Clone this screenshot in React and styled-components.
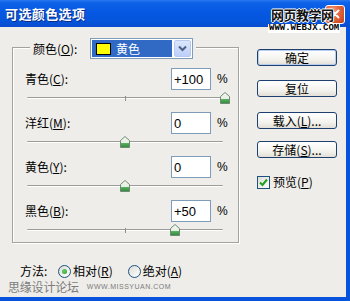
import React from 'react';
import styled, { createGlobalStyle } from 'styled-components';

const BODY = '#eeede9';
const FRAME = '#0853dc';

const GlobalStyle = createGlobalStyle`
  html, body { margin: 0; padding: 0; background: #fff; }
  body {
    font-family: "Noto Sans CJK SC", "Liberation Sans", sans-serif;
    font-size: 12px;
    color: #000;
    white-space: nowrap;
  }
`;

const Window = styled.div`
  position: relative;
  width: 350px;
  height: 301px;
  display: flex;
  flex-direction: column;
  overflow: hidden;
`;

const TitleBar = styled.div`
  flex: none;
  height: 27px;
  display: flex;
  align-items: center;
  justify-content: space-between;
  padding: 0 5px;
  background: linear-gradient(to bottom, #2a78f0 0%, #0d62e8 10%, #0658e2 45%, #0554dc 80%, #0a4ccc 100%);
`;

const Title = styled.span`
  color: #fff;
  font-weight: bold;
  font-size: 13px;
  line-height: 16px;
  letter-spacing: 0.4px;
  text-shadow: 1px 1px 0 #0a2c86;
`;

const CloseButton = styled.div`
  box-sizing: border-box;
  width: 20px;
  height: 19px;
  margin-top: 1px;
  border: 1px solid #fff;
  border-radius: 3px;
  background: radial-gradient(circle at 35% 30%, #f3a68a 0%, #e2643c 45%, #c4401c 100%);
  display: flex;
  align-items: center;
  justify-content: center;
`;

const TopMark = styled.div`
  position: absolute;
  left: 271px;
  top: 7px;
  display: flex;
  flex-direction: column;
  align-items: flex-start;
  pointer-events: none;
`;

const TopMarkCn = styled.span`
  font-size: 13px;
  line-height: 15px;
  font-weight: bold;
  color: #111;
  letter-spacing: -0.5px;
  text-shadow: 1px 0 0 #fff, -1px 0 0 #fff, 0 1px 0 #fff, 0 -1px 0 #fff;
`;

const TopMarkEn = styled.span`
  margin-top: 2px;
  margin-left: -3px;
  font-family: "Liberation Mono", monospace;
  font-size: 9px;
  line-height: 9px;
  font-weight: bold;
  color: #000;
  background: #fff;
  padding: 0 1px;
`;

const Frame = styled.div`
  flex: 1;
  display: flex;
  flex-direction: column;
  background: ${BODY};
  border-right: 4px solid ${FRAME};
  border-bottom: 4px solid ${FRAME};
`;

const Main = styled.div`
  display: flex;
  align-items: flex-start;
  padding: 20px 0 0 12px;
`;

const GroupBox = styled.div`
  box-sizing: border-box;
  width: 227px;
  height: 196px;
  border: 1px solid #a2a29e;
  box-shadow: inset 1px 1px 0 #fff, 1px 1px 0 #fff;
  display: flex;
  flex-direction: column;
`;

const Legend = styled.div`
  align-self: flex-start;
  display: flex;
  align-items: center;
  margin: -10px 0 0 17px;
  padding: 0 3px;
  background: ${BODY};
`;

const LegendLabel = styled.span`
  flex: none;
  width: 57px;
  line-height: 16px;
`;

const Dropdown = styled.div`
  box-sizing: border-box;
  flex: none;
  width: 103px;
  height: 21px;
  border: 1px solid #7f9db9;
  background: #fff;
  padding: 1px;
  display: flex;
`;

const Selected = styled.div`
  flex: 1;
  display: flex;
  align-items: center;
  gap: 5px;
  padding-left: 4px;
  background: #316ac5;
  color: #fff;
  line-height: 16px;
`;

const Swatch = styled.span`
  box-sizing: border-box;
  width: 15px;
  height: 12px;
  background: ${(p) => p.$color};
  border: 1px solid #000;
`;

const ArrowButton = styled.div`
  box-sizing: border-box;
  width: 17px;
  margin-left: 2px;
  border: 1px solid #b6c9f1;
  border-radius: 2px;
  background: linear-gradient(to bottom, #dce7fd, #bccff7);
  display: flex;
  align-items: center;
  justify-content: center;
`;

const Sections = styled.div`
  margin-top: 9px;
  padding-left: 12px;
  display: flex;
  flex-direction: column;
  gap: 2px;
`;

const Section = styled.div`
  display: flex;
  flex-direction: column;
`;

const Row = styled.div`
  height: 22px;
  display: flex;
  align-items: center;
`;

const Label = styled.span`
  flex: none;
  width: 146px;
  line-height: 16px;
`;

const NumberBox = styled.div`
  box-sizing: border-box;
  width: 40px;
  height: 22px;
  border: 1px solid #7f9db9;
  background: #fff;
  padding-left: 2px;
  display: flex;
  align-items: center;
  font-family: "Liberation Sans", Arial, sans-serif;
  font-size: 13px;
`;

const Percent = styled.span`
  margin-left: 6px;
  font-family: "Liberation Sans", Arial, sans-serif;
  font-size: 12px;
`;

const Slider = styled.div`
  position: relative;
  width: 200px;
  height: 20px;
`;

const Track = styled.div`
  width: 196px;
  margin: 7px 0 0 2px;
  height: 0;
  border-top: 1px solid #9c9c98;
  border-bottom: 1px solid #fff;
  border-radius: 1px;
`;

const Tick = styled.div`
  position: absolute;
  left: 100px;
  top: 6px;
  width: 1px;
  height: 5px;
  background: #8e8e8a;
`;

const Thumb = styled.svg`
  position: absolute;
  top: 2px;
  width: 10px;
  height: 12px;
`;

const Side = styled.div`
  width: 80px;
  margin-left: 18px;
  padding-top: 2px;
  display: flex;
  flex-direction: column;
`;

const Button = styled.div`
  box-sizing: border-box;
  height: 17px;
  margin-top: ${(p) => p.$mt || 0}px;
  border: 1px solid #1f3f6e;
  border-radius: 3px;
  background: linear-gradient(to bottom, #ffffff 0%, #f4f3ee 60%, #e2dfd6 100%);
  box-shadow: ${(p) => (p.$default ? 'inset 0 0 0 1px #b7cdf0' : 'none')};
  display: flex;
  align-items: center;
  justify-content: center;
  line-height: 15px;
`;

const CheckRow = styled.div`
  margin-top: 16px;
  display: flex;
  align-items: center;
  gap: 3px;
  line-height: 16px;
`;

const CheckBox = styled.span`
  box-sizing: border-box;
  width: 13px;
  height: 13px;
  border: 1px solid #1c5180;
  background: linear-gradient(135deg, #dcdcd6, #fff);
  display: flex;
  align-items: center;
  justify-content: center;
`;

const MethodRow = styled.div`
  margin-top: 20px;
  padding-left: 20px;
  height: 16px;
  display: flex;
  align-items: center;
  line-height: 16px;
`;

const MethodLabel = styled.span`
  width: 38px;
`;

const Radio = styled.span`
  box-sizing: border-box;
  width: 13px;
  height: 13px;
  margin-left: ${(p) => p.$ml || 0}px;
  margin-right: 2px;
  border: 1px solid #1c5180;
  border-radius: 50%;
  background: linear-gradient(135deg, #dcdcd6, #fff);
  display: flex;
  align-items: center;
  justify-content: center;
`;

const RadioDot = styled.span`
  width: 5px;
  height: 5px;
  border-radius: 50%;
  background: radial-gradient(circle at 40% 40%, #6fd06f, #1f9a1f);
`;

const FootMark = styled.div`
  padding-left: 8px;
  height: 15px;
  display: flex;
  align-items: center;
  color: #7c7c7c;
`;

const FootMarkCn = styled.span`
  font-size: 12px;
  line-height: 14px;
  letter-spacing: -0.2px;
`;

const FootMarkEn = styled.span`
  margin-left: 8px;
  font-family: "Liberation Sans", Arial, sans-serif;
  font-size: 7px;
  letter-spacing: 0.5px;
`;

const channels = [
  { name: '青色', key: 'C', value: 100 },
  { name: '洋红', key: 'M', value: 0 },
  { name: '黄色', key: 'Y', value: 0 },
  { name: '黑色', key: 'B', value: 50 },
];

const fmt = (v) => (v > 0 ? `+${v}` : `${v}`);

function SliderThumb({ value }) {
  const id = React.useId();
  return (
    <Thumb viewBox="0 0 10 12" style={{ left: value + 100 - 5 }}>
      <defs>
        <linearGradient id={id} x1="0" y1="0" x2="0" y2="1">
          <stop offset="0" stopColor="#f6f7f2" />
          <stop offset="0.55" stopColor="#e6efe2" />
          <stop offset="0.62" stopColor="#58ae62" />
          <stop offset="1" stopColor="#2e8a3a" />
        </linearGradient>
      </defs>
      <path d="M5 0.5 L9.5 4.5 L9.5 11.5 L0.5 11.5 L0.5 4.5 Z" fill={`url(#${id})`} stroke="#6f8a72" strokeWidth="1" />
    </Thumb>
  );
}

export default function App() {
  return (
    <>
      <GlobalStyle />
      <Window>
        <TitleBar>
          <Title>可选颜色选项</Title>
          <CloseButton>
            <svg width="10" height="10" viewBox="0 0 10 10">
              <path d="M1.5 1.5 L8.5 8.5 M8.5 1.5 L1.5 8.5" stroke="#fff" strokeWidth="2" strokeLinecap="round" />
            </svg>
          </CloseButton>
        </TitleBar>
        <Frame>
          <Main>
            <GroupBox>
              <Legend>
                <LegendLabel>
                  颜色(<u>O</u>):
                </LegendLabel>
                <Dropdown>
                  <Selected>
                    <Swatch $color="#ffff00" />
                    <span>黄色</span>
                  </Selected>
                  <ArrowButton>
                    <svg width="9" height="7" viewBox="0 0 9 7">
                      <path d="M1 1.5 L4.5 5 L8 1.5" fill="none" stroke="#4d6185" strokeWidth="2" />
                    </svg>
                  </ArrowButton>
                </Dropdown>
              </Legend>
              <Sections>
                {channels.map((c) => (
                  <Section key={c.key}>
                    <Row>
                      <Label>
                        {c.name}(<u>{c.key}</u>):
                      </Label>
                      <NumberBox>{fmt(c.value)}</NumberBox>
                      <Percent>%</Percent>
                    </Row>
                    <Slider>
                      <Track />
                      <Tick />
                      <SliderThumb value={c.value} />
                    </Slider>
                  </Section>
                ))}
              </Sections>
            </GroupBox>
            <Side>
              <Button $default>确定</Button>
              <Button $mt={14}>复位</Button>
              <Button $mt={15}>
                载入(<u>L</u>)...
              </Button>
              <Button $mt={12}>
                存储(<u>S</u>)...
              </Button>
              <CheckRow>
                <CheckBox>
                  <svg width="9" height="9" viewBox="0 0 9 9">
                    <path d="M1 4.5 L3.5 7 L8 1.5" fill="none" stroke="#21a121" strokeWidth="2" />
                  </svg>
                </CheckBox>
                <span>
                  预览(<u>P</u>)
                </span>
              </CheckRow>
            </Side>
          </Main>
          <MethodRow>
            <MethodLabel>方法:</MethodLabel>
            <Radio>
              <RadioDot />
            </Radio>
            <span>
              相对(<u>R</u>)
            </span>
            <Radio $ml={15} />
            <span>
              绝对(<u>A</u>)
            </span>
          </MethodRow>
          <FootMark>
            <FootMarkCn>思缘设计论坛</FootMarkCn>
            <FootMarkEn>WWW.MISSYUAN.COM</FootMarkEn>
          </FootMark>
        </Frame>
        <TopMark>
          <TopMarkCn>网页教学网</TopMarkCn>
          <TopMarkEn>WWW.WEBJX.COM</TopMarkEn>
        </TopMark>
      </Window>
    </>
  );
}
